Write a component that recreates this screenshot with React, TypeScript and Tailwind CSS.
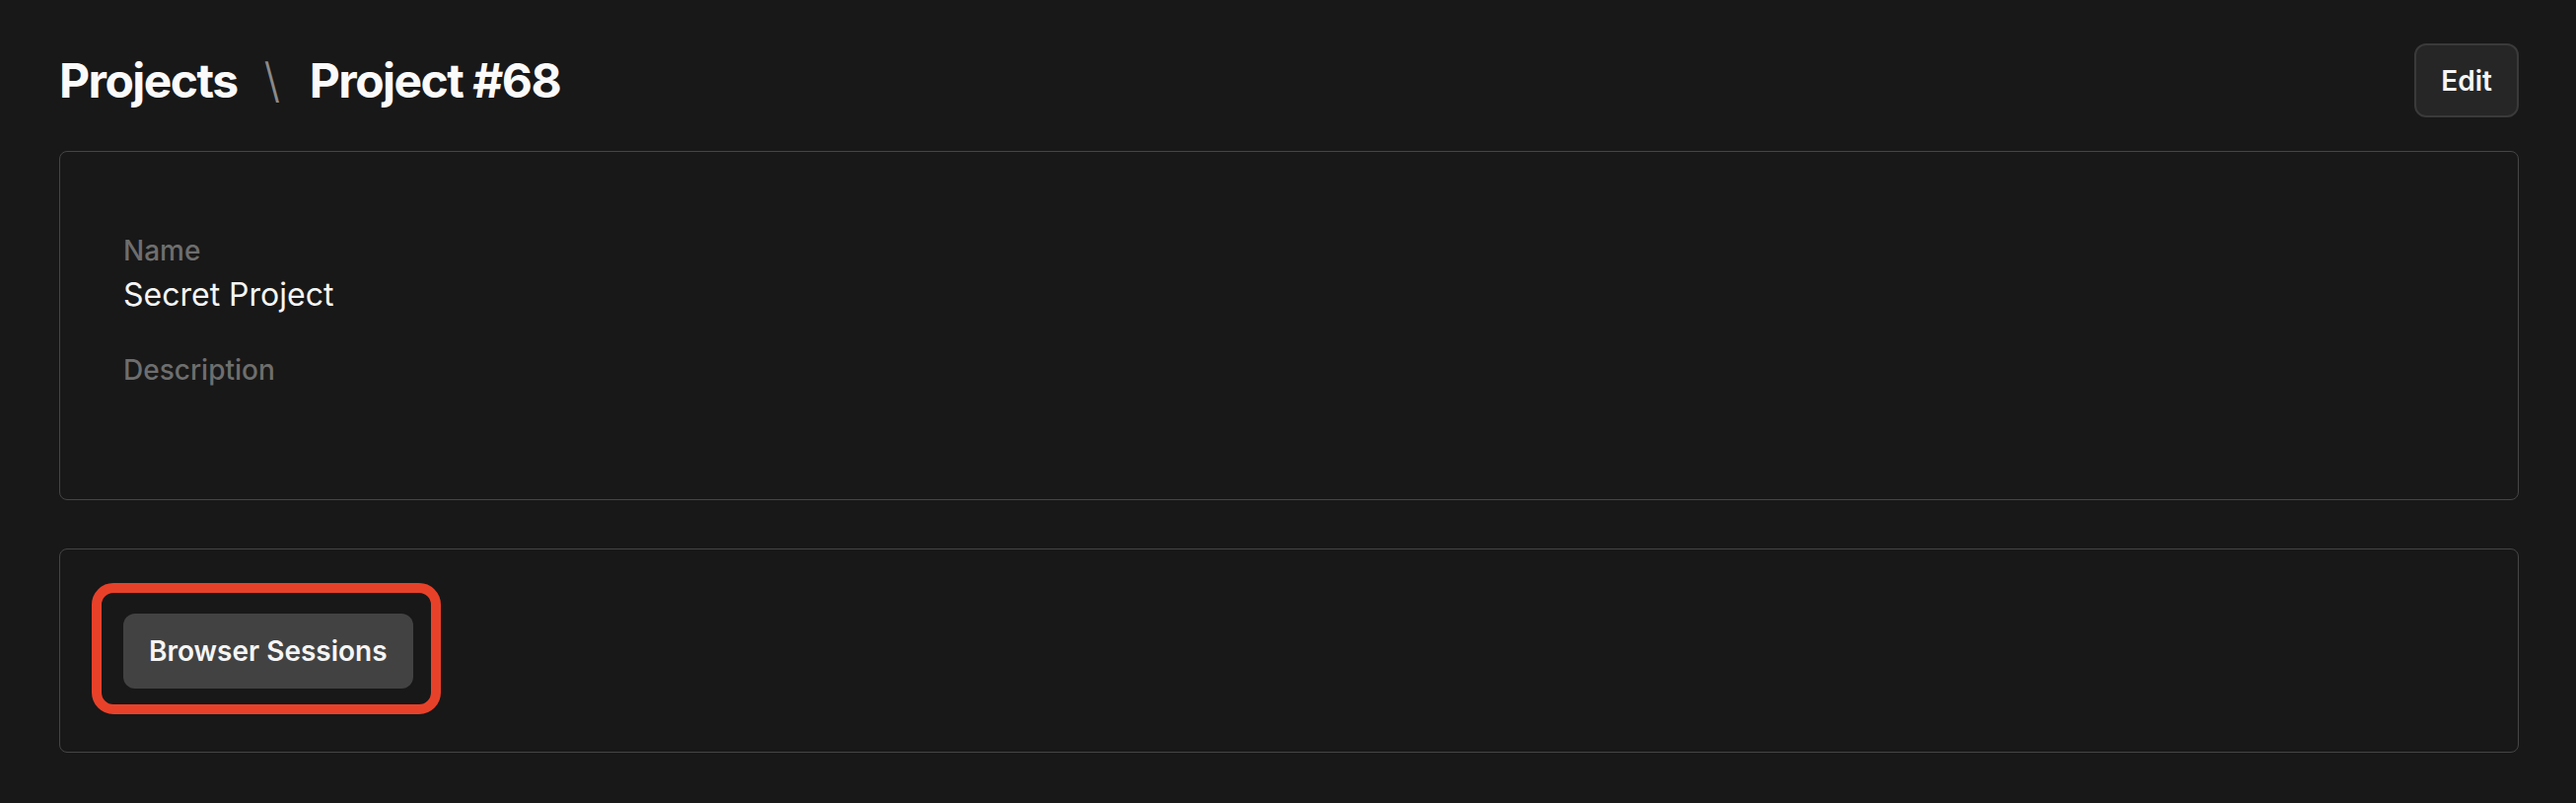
import React from 'react';

const Field: React.FC<{ label: string; value?: string; first?: boolean }> = ({ label, value, first }) => (
  <div className={first ? '' : 'mt-[34px]'}>
    <div className="text-[28px] leading-[40px] font-medium text-[#6e6e6e]">{label}</div>
    {value ? (
      <div className="mt-[3px] text-[32px] leading-[44px] text-[#f5f5f5]">{value}</div>
    ) : (
      <div className="mt-[2px] h-[45px]" />
    )}
  </div>
);

const App: React.FC = () => {
  return (
    <div
      className="min-h-screen bg-[#181818] pl-[60px] pr-[58px] pt-[44px] pb-[51px] text-white"
      style={{ fontFamily: 'Inter, "Noto Sans", sans-serif' }}
    >
      {/* header */}
      <div className="flex h-[75px] items-center justify-between">
        <h1 className="flex items-center text-[48px] leading-none font-bold tracking-[-0.032em] text-[#fafafa]">
          <span>Projects</span>
          <span className="ml-[27px] mr-[31px] font-light text-[#8a8a8a]">\</span>
          <span>Project #68</span>
        </h1>
        <button className="h-[75px] rounded-[12px] border-2 border-[#3a3a3a] bg-[#262626] px-[25px] text-[28px] font-semibold text-[#f5f5f5]">
          Edit
        </button>
      </div>

      {/* details */}
      <div className="mt-[34px] rounded-[8px] border border-[#454545] px-[64px] pt-[80px] pb-[64px]">
        <Field label="Name" value="Secret Project" first />
        <Field label="Description" />
      </div>

      {/* actions */}
      <div className="mt-[49px] rounded-[8px] border border-[#454545] px-[64px] pt-[65px] pb-[64px]">
        <div className="relative inline-block">
          <button className="h-[76px] rounded-[12px] bg-[#424242] px-[26px] text-[28px] font-semibold text-[#f5f5f5]">
            Browser Sessions
          </button>
          <span className="pointer-events-none absolute -top-[31px] -bottom-[26px] -left-[32px] -right-[28px] rounded-[22px] border-[10px] border-[#e8412a]" />
        </div>
      </div>
    </div>
  );
};

export default App;
